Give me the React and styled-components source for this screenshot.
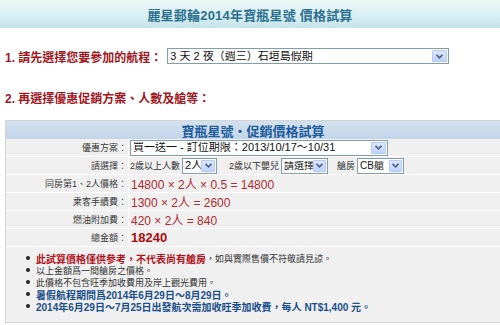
import React from "react";
import styled, { createGlobalStyle } from "styled-components";

const Global = createGlobalStyle`
  html, body { margin: 0; padding: 0; background: #fff; }
  body { font-family: "Liberation Sans", "Noto Sans CJK TC", sans-serif; color: #333; }
  * { box-sizing: border-box; }
`;

const CJK = `"Liberation Sans", "Noto Sans CJK TC", sans-serif`;

const Page = styled.div`
  width: 500px;
  height: 325px;
  overflow: hidden;
  display: flex;
  flex-direction: column;
`;

const TitleBar = styled.div`
  height: 28px;
  background: linear-gradient(#eef8f9, #d6eef2 60%, #c6e4ea);
  display: flex;
  align-items: center;
  justify-content: center;
  font-family: ${CJK};
  font-weight: bold;
  font-size: 13px;
  color: #2d6f8f;
  letter-spacing: 0.2px;
`;

const StepRow = styled.div`
  display: flex;
  align-items: center;
  padding-left: 5px;
  height: 16px;
  margin-top: ${(p) => p.$mt}px;
`;

const StepLabel = styled.span`
  font-family: ${CJK};
  font-weight: bold;
  font-size: 12px;
  color: #a3161d;
  white-space: nowrap;
`;

const SelectBox = styled.div`
  width: ${(p) => p.$w}px;
  height: ${(p) => p.$h || 16}px;
  margin-left: ${(p) => p.$ml || 0}px;
  border: 1px solid #7f9db9;
  background: #fff;
  display: flex;
  align-items: center;
  flex-shrink: 0;
`;

const SelectText = styled.span`
  flex: 1;
  padding-left: 2px;
  font-family: ${CJK};
  font-size: ${(p) => p.$fs || 11}px;
  color: #111;
  white-space: nowrap;
  overflow: hidden;
  line-height: 1;
`;

const ArrowBtn = styled.span`
  width: ${(p) => p.$aw}px;
  height: calc(100% - 2px);
  margin-right: 1px;
  border: 1px solid #b7c9f4;
  border-radius: 1px;
  background: linear-gradient(#dce6fd, #c0d2fb);
  display: flex;
  align-items: center;
  justify-content: center;
  flex-shrink: 0;
`;

const Chevron = () => (
  <svg width="7" height="5" viewBox="0 0 7 5">
    <path d="M0.5 0.8 L3.5 3.8 L6.5 0.8" fill="none" stroke="#4a5f8a" strokeWidth="1.6" />
  </svg>
);

const Select = ({ w, ml, h, fs, aw = 15, children }) => (
  <SelectBox $w={w} $ml={ml} $h={h}>
    <SelectText $fs={fs}>{children}</SelectText>
    <ArrowBtn $aw={aw}>
      <Chevron />
    </ArrowBtn>
  </SelectBox>
);

const Panel = styled.div`
  margin-top: 15px;
  margin-left: 5px;
  flex: 1;
  margin-bottom: 2px;
  background: #f0f0f0;
  border: 1px solid #d4d4d4;
  border-right: none;
  display: flex;
  flex-direction: column;
`;

const PanelHead = styled.div`
  height: 18px;
  background: linear-gradient(#d3e0ee, #c3d5e9);
  display: flex;
  align-items: center;
  justify-content: center;
  font-family: ${CJK};
  font-weight: bold;
  font-size: 13px;
  color: #1d5b9b;
`;

const Grid = styled.div`
  display: grid;
  grid-template-columns: 123px 1fr;
`;

const LabelCell = styled.div`
  height: 18px;
  border-bottom: 1px solid #fff;
  border-right: 1px solid #fff;
  display: flex;
  align-items: center;
  justify-content: flex-end;
  padding-right: 1px;
  font-family: ${CJK};
  font-size: 9px;
  color: #3a3a3a;
  white-space: nowrap;
`;

const ValueCell = styled.div`
  height: 18px;
  border-bottom: 1px solid #fff;
  display: flex;
  align-items: center;
  padding-left: 1px;
  white-space: nowrap;
`;

const SmallText = styled.span`
  font-family: ${CJK};
  font-size: 9px;
  color: #333;
  margin-left: ${(p) => p.$ml || 0}px;
  margin-right: 2px;
`;

const Price = styled.span`
  font-family: ${CJK};
  font-size: ${(p) => (p.$total ? 13 : 12)}px;
  font-weight: ${(p) => (p.$total ? "bold" : "normal")};
  color: ${(p) => (p.$total ? "#b00a0a" : "#b02a2e")};
  padding-left: 1px;
`;

const Notes = styled.ul`
  list-style: none;
  margin: 5px 0 0 0;
  padding: 0 0 0 20px;
`;

const Note = styled.li`
  height: 12px;
  display: flex;
  align-items: center;
  white-space: nowrap;
  font-family: ${CJK};
  font-size: 9px;
  color: #333;
  &::before {
    content: "";
    width: 4px;
    height: 4px;
    border-radius: 50%;
    background: #222;
    margin-right: 6px;
    flex-shrink: 0;
  }
`;

const Strong = styled.span`
  font-weight: bold;
  font-size: 10px;
  color: ${(p) => (p.$blue ? "#1b4f8c" : "#b3141b")};
`;

export default function App() {
  return (
    <>
      <Global />
      <Page>
        <TitleBar>麗星郵輪2014年寶瓶星號 價格試算</TitleBar>
        <StepRow $mt={20}>
          <StepLabel>1. 請先選擇您要參加的航程：</StepLabel>
          <Select w={282} ml={5}>
            3 天 2 夜（週三）石垣島假期
          </Select>
        </StepRow>
        <StepRow $mt={25}>
          <StepLabel>2. 再選擇優惠促銷方案、人數及艙等：</StepLabel>
        </StepRow>
        <Panel>
          <PanelHead>寶瓶星號・促銷價格試算</PanelHead>
          <Grid>
            <LabelCell>優惠方案：</LabelCell>
            <ValueCell>
              <Select w={258}>買一送一 - 訂位期限：2013/10/17～10/31</Select>
            </ValueCell>
            <LabelCell>請選擇：</LabelCell>
            <ValueCell>
              <SmallText>2歲以上人數</SmallText>
              <Select w={35} aw={14}>2人</Select>
              <SmallText $ml={12}>2歲以下嬰兒</SmallText>
              <Select w={47} fs={10} aw={13}>請選擇</Select>
              <SmallText $ml={9}>艙房</SmallText>
              <Select w={47} fs={10} aw={13}>CB艙</Select>
            </ValueCell>
            <LabelCell>同房第1、2人價格：</LabelCell>
            <ValueCell>
              <Price>14800 × 2人 × 0.5 = 14800</Price>
            </ValueCell>
            <LabelCell>乘客手續費：</LabelCell>
            <ValueCell>
              <Price>1300 × 2人 = 2600</Price>
            </ValueCell>
            <LabelCell>燃油附加費：</LabelCell>
            <ValueCell>
              <Price>420 × 2人 = 840</Price>
            </ValueCell>
            <LabelCell>總金額：</LabelCell>
            <ValueCell>
              <Price $total>18240</Price>
            </ValueCell>
          </Grid>
          <Notes>
            <Note>
              <Strong>此試算價格僅供參考，不代表尚有艙房</Strong>，如與實際售價不符敬請見諒。
            </Note>
            <Note>以上金額爲一間艙房之價格。</Note>
            <Note>此價格不包含旺季加收費用及岸上觀光費用。</Note>
            <Note>
              <Strong $blue>暑假航程期間爲2014年6月29日～8月29日。</Strong>
            </Note>
            <Note>
              <Strong $blue>2014年6月29日～7月25日出發航次需加收旺季加收費，每人 NT$1,400 元。</Strong>
            </Note>
          </Notes>
        </Panel>
      </Page>
    </>
  );
}
